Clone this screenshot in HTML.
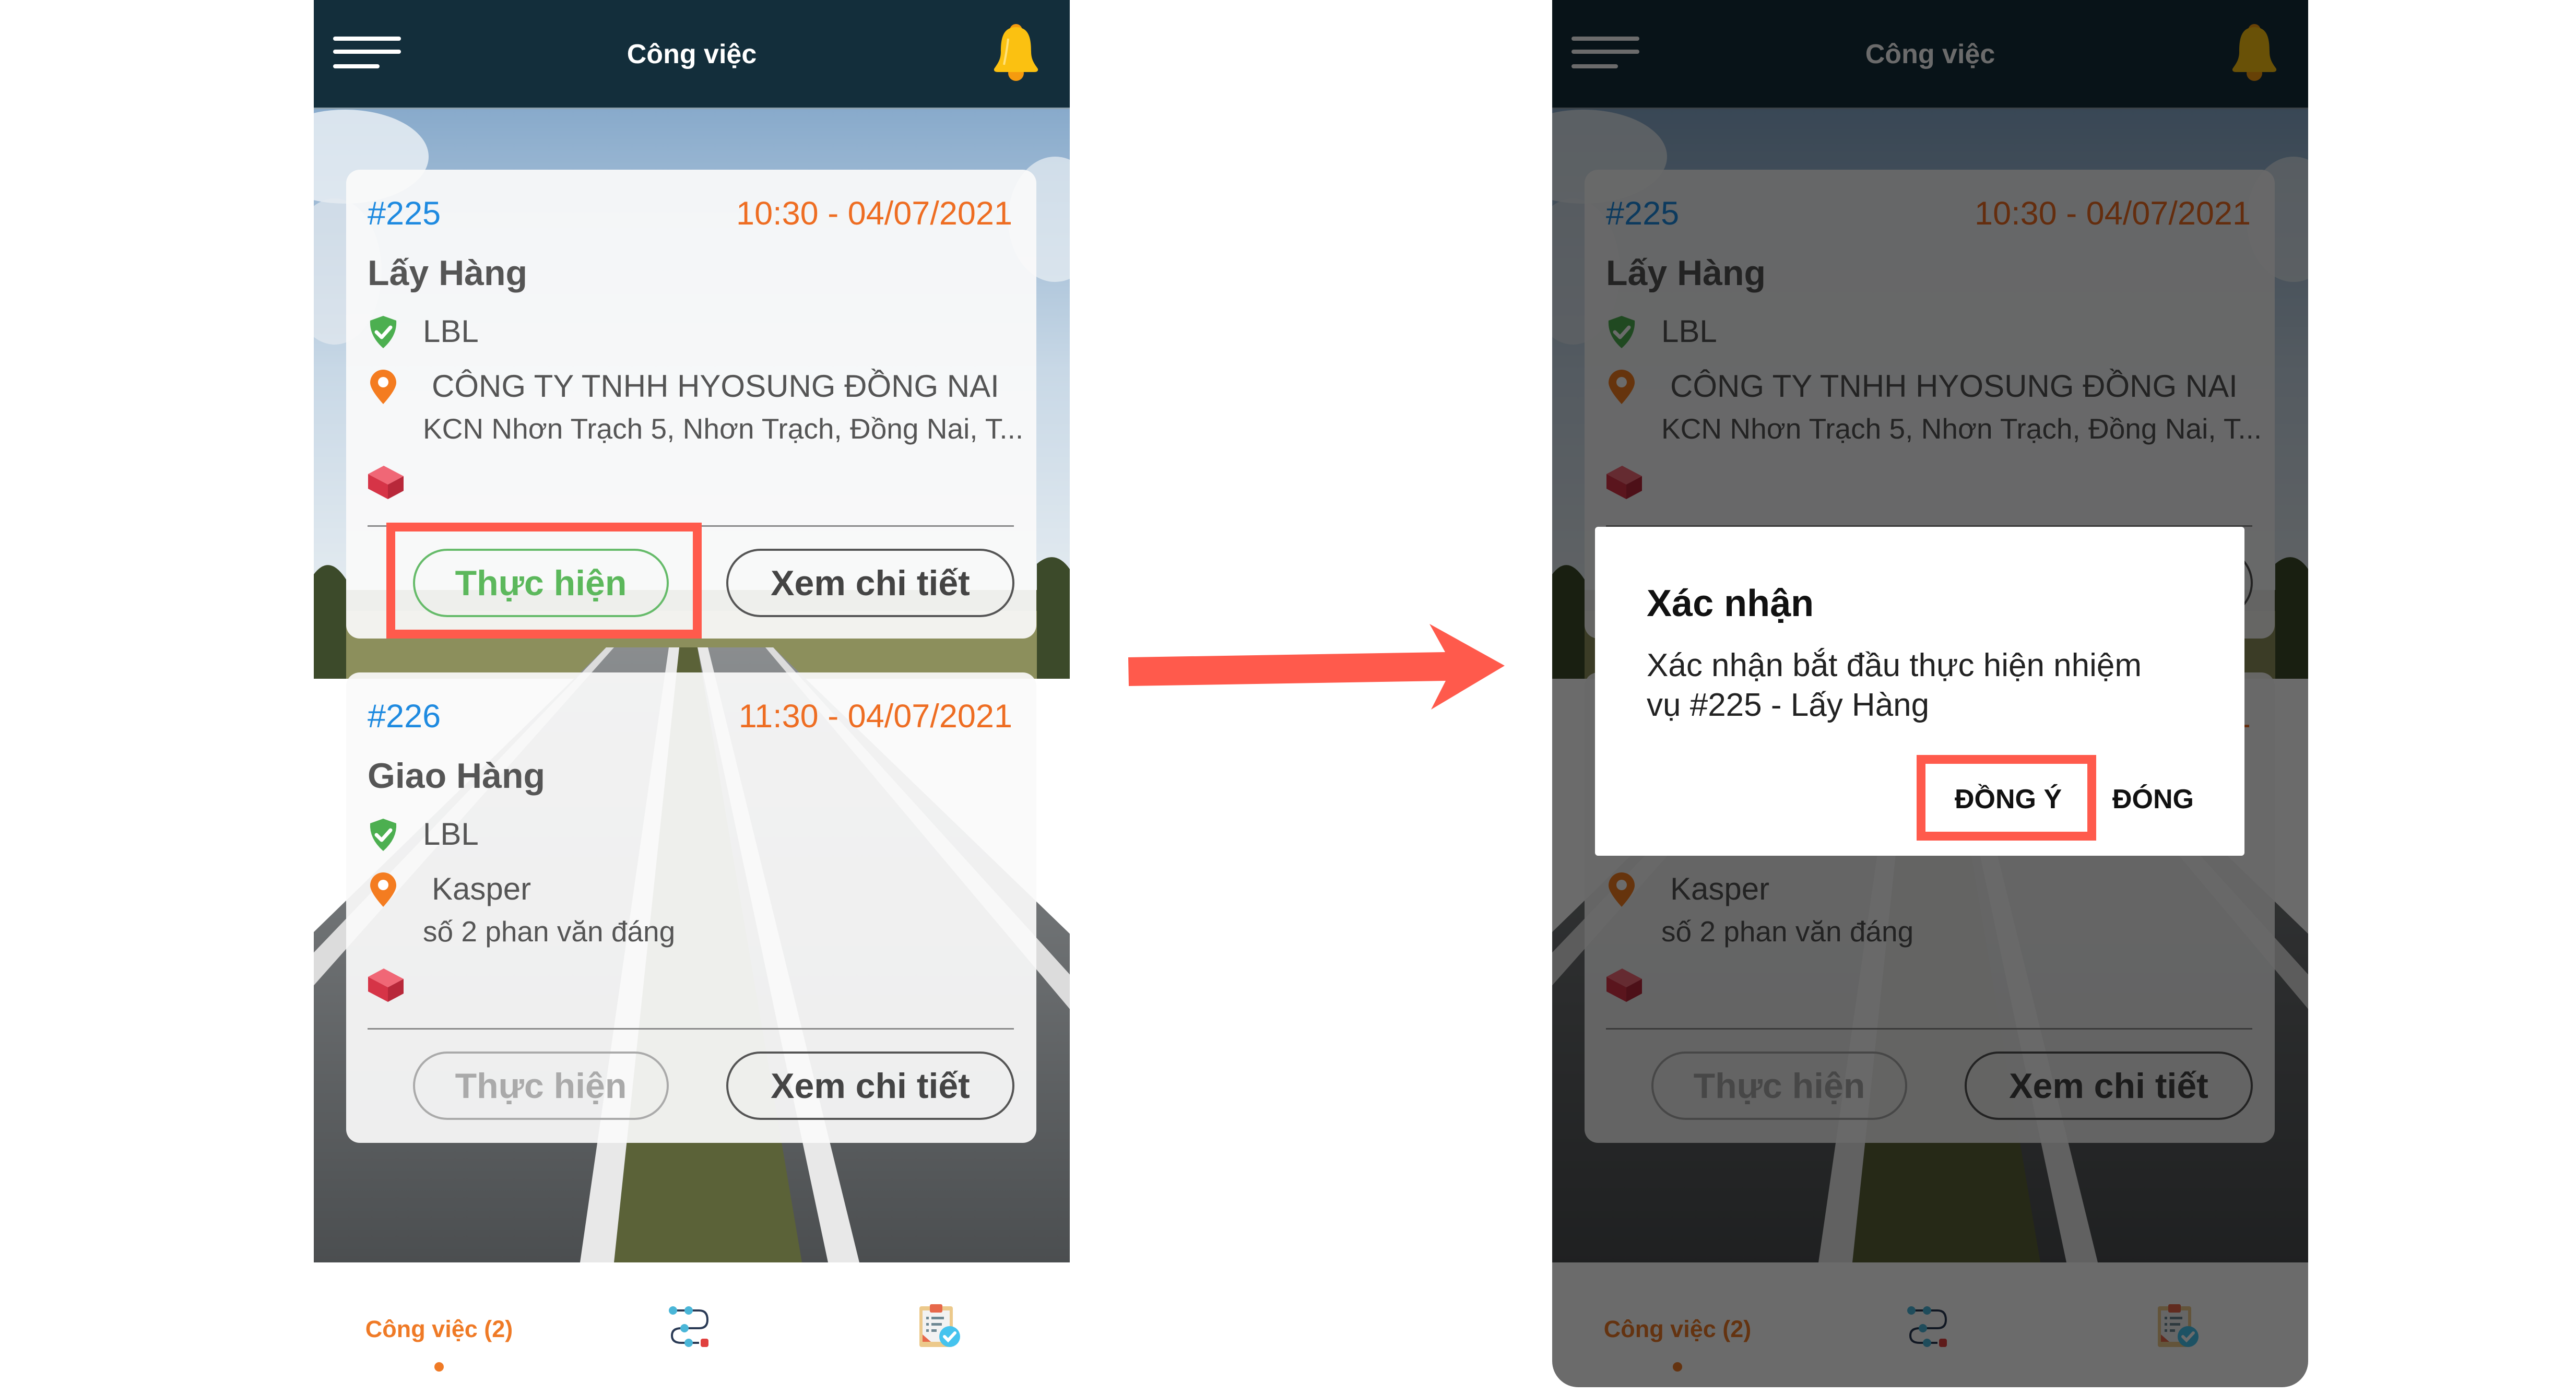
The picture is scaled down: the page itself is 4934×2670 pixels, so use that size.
<!DOCTYPE html>
<html><head><meta charset="utf-8">
<style>
*{margin:0;padding:0;box-sizing:border-box}
body{width:4934px;height:2670px;background:#fff;position:relative;overflow:hidden;font-family:"Liberation Sans","Noto Sans CJK SC",sans-serif}
.phone{position:absolute;top:0;width:1448px;height:2657px;overflow:hidden;border-radius:0 0 50px 50px;background:#fff}
.hdr{position:absolute;left:0;top:0;width:1448px;height:209px;background:#132e3b;border-bottom:3px solid #8da1ad}
.hdr .t{position:absolute;left:0;width:1448px;top:78px;text-align:center;color:#fff;font-weight:bold;font-size:52px;line-height:52px}
.hb{position:absolute;left:37px;height:8px;border-radius:4px;background:#fff}
.bg{position:absolute;left:0;top:209px}
.card{position:absolute;left:62px;width:1322px;height:898px;border-radius:26px;background:rgba(250,250,250,0.93)}
.card div{position:absolute;white-space:nowrap}
.id{left:41px;top:53px;font-size:63px;line-height:63px;color:#1e8ae0}
.dt{right:46px;top:53px;font-size:63px;line-height:63px;color:#ee6d22}
.ti{left:41px;top:164px;font-size:68px;line-height:68px;font-weight:bold;color:#555}
.lb{left:147px;top:280px;font-size:60px;line-height:60px;color:#555}
.ad{left:164px;top:385px;font-size:60px;line-height:60px;color:#555}
.sb{left:147px;top:469px;font-size:55px;line-height:55px;color:#555}
.dv{left:41px;top:681px;width:1238px;height:3px;background:#8a8a8a}
.btn{top:726px;height:131px;border-radius:66px;border:4px solid #555;font-weight:bold;font-size:68px;display:flex;align-items:center;justify-content:center;color:#444}
.b1{left:128px;width:490px}
.b2{left:728px;width:552px}
.g{border-color:#66bb6a;color:#5cb85c}
.d{border-color:#aaa;color:#aaa}
.card svg{position:absolute}
.nav{position:absolute;left:0;top:2418px;width:1448px;height:239px;background:#fff}
.nt{position:absolute;left:90px;width:300px;text-align:center;top:2523px;font-size:45px;line-height:45px;font-weight:bold;color:#ef7a26}
.red{position:absolute;border:17px solid #ff5a4c}
</style></head><body>

<!-- LEFT PHONE -->
<div class="phone" style="left:601px">
<svg class="bg" width="1448" height="2209" viewBox="0 209 1448 2209">
<defs>
<linearGradient id="sky" x1="0" y1="0" x2="0" y2="1"><stop offset="0" stop-color="#88aacb"/><stop offset="0.5" stop-color="#c8d8e6"/><stop offset="1" stop-color="#e8eef2"/></linearGradient>
<linearGradient id="rd" x1="0" y1="0" x2="0" y2="1"><stop offset="0" stop-color="#8a8d8f"/><stop offset="1" stop-color="#4b4e50"/></linearGradient>
</defs>
<rect x="0" y="209" width="1448" height="1000" fill="url(#sky)"/>
<ellipse cx="60" cy="300" rx="160" ry="90" fill="#eef2f6" opacity="0.8"/>
<ellipse cx="40" cy="520" rx="90" ry="140" fill="#e4eaf0" opacity="0.7"/>
<ellipse cx="1420" cy="420" rx="90" ry="120" fill="#eaf0f4" opacity="0.7"/>
<rect x="0" y="1130" width="1448" height="170" fill="#55603a"/>
<rect x="0" y="1170" width="1448" height="130" fill="#8c8f5c"/>
<path d="M0 1100 Q30 1060 62 1110 L62 1300 L0 1300Z" fill="#3c4a2a"/>
<path d="M1385 1080 Q1420 1050 1448 1090 L1448 1300 L1385 1300Z" fill="#3c4a2a"/>
<polygon points="560,1240 880,1240 2100,2418 -650,2418" fill="url(#rd)"/>
<polygon points="700,1240 735,1240 935,2418 575,2418" fill="#5b6238"/>
<polygon points="680,1240 700,1240 575,2418 510,2418" fill="#e8e8e8"/>
<polygon points="735,1240 755,1240 1045,2418 985,2418" fill="#e8e8e8"/>
<polygon points="560,1240 575,1240 -100,2000 -130,1960" fill="#dcdcdc"/>
<polygon points="865,1240 880,1240 1560,1990 1530,2030" fill="#dcdcdc"/>
</svg>

<div class="hdr">
<div class="hb" style="top:70px;width:130px"></div>
<div class="hb" style="top:95px;width:130px"></div>
<div class="hb" style="top:123px;width:89px"></div>
<div class="t">Công việc</div>
<svg style="position:absolute;left:1300px;top:44px" width="90" height="112" viewBox="0 0 90 112"><circle cx="45" cy="14" r="12" fill="#f59b0f"/><circle cx="45" cy="96" r="15" fill="#f59b0f"/><path d="M45 8 C20 8 16 30 16 55 C16 72 8 80 3 88 Q2 94 10 94 L80 94 Q88 94 87 88 C82 80 74 72 74 55 C74 30 70 8 45 8Z" fill="#fbc111"/><path d="M30 30 Q28 50 22 80" stroke="#ffe27a" stroke-width="4" fill="none"/></svg>
</div>

<div class="card" style="top:325px">
<div class="id">#225</div><div class="dt">10:30 - 04/07/2021</div>
<div class="ti">Lấy Hàng</div>
<svg style="left:42px;top:278px" width="58" height="66" viewBox="0 0 58 66"><path d="M29 2 L54 11 Q56 40 29 64 Q2 40 4 11Z" fill="#4caf50"/><path d="M16 33 L26 43 L43 24" stroke="#fff" stroke-width="7" fill="none" stroke-linecap="round" stroke-linejoin="round"/></svg>
<div class="lb">LBL</div>
<svg style="left:42px;top:381px" width="58" height="70" viewBox="0 0 58 70"><path d="M29 68 Q4 40 4 27 A25 25 0 0 1 54 27 Q54 40 29 68Z" fill="#f47c20"/><circle cx="29" cy="26" r="10" fill="#fff"/></svg>
<div class="ad">CÔNG TY TNHH HYOSUNG ĐỒNG NAI</div>
<div class="sb">KCN Nhơn Trạch 5, Nhơn Trạch, Đồng Nai, T...</div>
<svg style="left:40px;top:561px" width="72" height="72" viewBox="0 0 72 72"><polygon points="2,22 32,6 70,26 40,42" fill="#f06776"/><polygon points="2,22 40,42 40,70 2,50" fill="#d63447"/><polygon points="40,42 70,26 70,54 40,70" fill="#b8283a"/></svg>
<div class="dv"></div>
<div class="btn b1 g">Thực hiện</div>
<div class="btn b2">Xem chi tiết</div>
</div>

<div class="card" style="top:1288px;height:901px">
<div class="id">#226</div><div class="dt">11:30 - 04/07/2021</div>
<div class="ti">Giao Hàng</div>
<svg style="left:42px;top:278px" width="58" height="66" viewBox="0 0 58 66"><path d="M29 2 L54 11 Q56 40 29 64 Q2 40 4 11Z" fill="#4caf50"/><path d="M16 33 L26 43 L43 24" stroke="#fff" stroke-width="7" fill="none" stroke-linecap="round" stroke-linejoin="round"/></svg>
<div class="lb">LBL</div>
<svg style="left:42px;top:381px" width="58" height="70" viewBox="0 0 58 70"><path d="M29 68 Q4 40 4 27 A25 25 0 0 1 54 27 Q54 40 29 68Z" fill="#f47c20"/><circle cx="29" cy="26" r="10" fill="#fff"/></svg>
<div class="ad">Kasper</div>
<div class="sb">số 2 phan văn đáng</div>
<svg style="left:40px;top:561px" width="72" height="72" viewBox="0 0 72 72"><polygon points="2,22 32,6 70,26 40,42" fill="#f06776"/><polygon points="2,22 40,42 40,70 2,50" fill="#d63447"/><polygon points="40,42 70,26 70,54 40,70" fill="#b8283a"/></svg>
<div class="dv"></div>
<div class="btn b1 d">Thực hiện</div>
<div class="btn b2">Xem chi tiết</div>
</div>

<div class="nav"></div>
<div class="nt">Công việc (2)</div>
<div style="position:absolute;left:231px;top:2609px;width:18px;height:18px;border-radius:9px;background:#ef7a26"></div>
<svg style="position:absolute;left:678px;top:2500px" width="82" height="80" viewBox="0 0 82 80"><path d="M12 10 H34 M42 10 H60 Q76 10 76 28 Q76 44 60 44 H38 M26 44 Q8 44 8 58 Q8 72 26 72 H36 M44 72 H60" stroke="#2a3a55" stroke-width="4" fill="none"/><circle cx="10" cy="10" r="8" fill="#4ab6d8"/><circle cx="40" cy="10" r="8" fill="#4ab6d8"/><circle cx="32" cy="44" r="8" fill="#4ab6d8"/><circle cx="40" cy="72" r="8" fill="#4ab6d8"/><rect x="63" y="64" width="15" height="16" rx="4" fill="#e0403e"/></svg>
<svg style="position:absolute;left:1158px;top:2498px" width="82" height="84" viewBox="0 0 82 84"><rect x="2" y="4" width="64" height="78" rx="4" fill="#ecc98b"/><rect x="8" y="12" width="52" height="60" fill="#f2f2f2"/><rect x="22" y="0" width="24" height="16" rx="3" fill="#e7684b"/><polygon points="8,58 8,72 24,72" fill="#e7684b"/><g fill="#6e8893"><rect x="15" y="24" width="5" height="5"/><rect x="15" y="36" width="5" height="5"/><rect x="15" y="48" width="5" height="5"/><rect x="25" y="24" width="24" height="5"/><rect x="25" y="36" width="20" height="5"/><rect x="25" y="48" width="10" height="5"/></g><circle cx="60" cy="62" r="20" fill="#45c3ee"/><path d="M50 62 L57 69 L70 55" stroke="#fff" stroke-width="6" fill="none" stroke-linecap="round"/></svg>

<div class="red" style="left:139px;top:1001px;width:604px;height:222px"></div>
</div>

<!-- ARROW -->
<svg style="position:absolute;left:0;top:0" width="4934" height="2670"><polygon points="2161,1259 2768,1249 2738,1195 2882,1275 2741,1359 2769,1304 2162,1314" fill="#ff5a4c"/></svg>

<!-- RIGHT PHONE -->
<div class="phone" style="left:2973px">
<svg class="bg" width="1448" height="2209" viewBox="0 209 1448 2209">
<defs>
<linearGradient id="sky2" x1="0" y1="0" x2="0" y2="1"><stop offset="0" stop-color="#88aacb"/><stop offset="0.5" stop-color="#c8d8e6"/><stop offset="1" stop-color="#e8eef2"/></linearGradient>
<linearGradient id="rd2" x1="0" y1="0" x2="0" y2="1"><stop offset="0" stop-color="#8a8d8f"/><stop offset="1" stop-color="#4b4e50"/></linearGradient>
</defs>
<rect x="0" y="209" width="1448" height="1000" fill="url(#sky2)"/>
<ellipse cx="60" cy="300" rx="160" ry="90" fill="#eef2f6" opacity="0.8"/>
<ellipse cx="40" cy="520" rx="90" ry="140" fill="#e4eaf0" opacity="0.7"/>
<ellipse cx="1420" cy="420" rx="90" ry="120" fill="#eaf0f4" opacity="0.7"/>
<rect x="0" y="1130" width="1448" height="170" fill="#55603a"/>
<rect x="0" y="1170" width="1448" height="130" fill="#8c8f5c"/>
<path d="M0 1100 Q30 1060 62 1110 L62 1300 L0 1300Z" fill="#3c4a2a"/>
<path d="M1385 1080 Q1420 1050 1448 1090 L1448 1300 L1385 1300Z" fill="#3c4a2a"/>
<polygon points="560,1240 880,1240 2100,2418 -650,2418" fill="url(#rd2)"/>
<polygon points="700,1240 735,1240 935,2418 575,2418" fill="#5b6238"/>
<polygon points="680,1240 700,1240 575,2418 510,2418" fill="#e8e8e8"/>
<polygon points="735,1240 755,1240 1045,2418 985,2418" fill="#e8e8e8"/>
<polygon points="560,1240 575,1240 -100,2000 -130,1960" fill="#dcdcdc"/>
<polygon points="865,1240 880,1240 1560,1990 1530,2030" fill="#dcdcdc"/>
</svg>

<div class="hdr">
<div class="hb" style="top:70px;width:130px"></div>
<div class="hb" style="top:95px;width:130px"></div>
<div class="hb" style="top:123px;width:89px"></div>
<div class="t">Công việc</div>
<svg style="position:absolute;left:1300px;top:44px" width="90" height="112" viewBox="0 0 90 112"><circle cx="45" cy="14" r="12" fill="#f59b0f"/><circle cx="45" cy="96" r="15" fill="#f59b0f"/><path d="M45 8 C20 8 16 30 16 55 C16 72 8 80 3 88 Q2 94 10 94 L80 94 Q88 94 87 88 C82 80 74 72 74 55 C74 30 70 8 45 8Z" fill="#fbc111"/></svg>
</div>

<div class="card" style="top:325px">
<div class="id">#225</div><div class="dt">10:30 - 04/07/2021</div>
<div class="ti">Lấy Hàng</div>
<svg style="left:42px;top:278px" width="58" height="66" viewBox="0 0 58 66"><path d="M29 2 L54 11 Q56 40 29 64 Q2 40 4 11Z" fill="#4caf50"/><path d="M16 33 L26 43 L43 24" stroke="#fff" stroke-width="7" fill="none" stroke-linecap="round" stroke-linejoin="round"/></svg>
<div class="lb">LBL</div>
<svg style="left:42px;top:381px" width="58" height="70" viewBox="0 0 58 70"><path d="M29 68 Q4 40 4 27 A25 25 0 0 1 54 27 Q54 40 29 68Z" fill="#f47c20"/><circle cx="29" cy="26" r="10" fill="#fff"/></svg>
<div class="ad">CÔNG TY TNHH HYOSUNG ĐỒNG NAI</div>
<div class="sb">KCN Nhơn Trạch 5, Nhơn Trạch, Đồng Nai, T...</div>
<svg style="left:40px;top:561px" width="72" height="72" viewBox="0 0 72 72"><polygon points="2,22 32,6 70,26 40,42" fill="#f06776"/><polygon points="2,22 40,42 40,70 2,50" fill="#d63447"/><polygon points="40,42 70,26 70,54 40,70" fill="#b8283a"/></svg>
<div class="dv"></div>
<div class="btn b1 g">Thực hiện</div>
<div class="btn b2">Xem chi tiết</div>
</div>

<div class="card" style="top:1288px;height:901px">
<div class="id">#226</div><div class="dt">11:30 - 04/07/2021</div>
<div class="ti">Giao Hàng</div>
<svg style="left:42px;top:278px" width="58" height="66" viewBox="0 0 58 66"><path d="M29 2 L54 11 Q56 40 29 64 Q2 40 4 11Z" fill="#4caf50"/><path d="M16 33 L26 43 L43 24" stroke="#fff" stroke-width="7" fill="none" stroke-linecap="round" stroke-linejoin="round"/></svg>
<div class="lb">LBL</div>
<svg style="left:42px;top:381px" width="58" height="70" viewBox="0 0 58 70"><path d="M29 68 Q4 40 4 27 A25 25 0 0 1 54 27 Q54 40 29 68Z" fill="#f47c20"/><circle cx="29" cy="26" r="10" fill="#fff"/></svg>
<div class="ad">Kasper</div>
<div class="sb">số 2 phan văn đáng</div>
<svg style="left:40px;top:561px" width="72" height="72" viewBox="0 0 72 72"><polygon points="2,22 32,6 70,26 40,42" fill="#f06776"/><polygon points="2,22 40,42 40,70 2,50" fill="#d63447"/><polygon points="40,42 70,26 70,54 40,70" fill="#b8283a"/></svg>
<div class="dv"></div>
<div class="btn b1 d">Thực hiện</div>
<div class="btn b2">Xem chi tiết</div>
</div>

<div class="nav"></div>
<div class="nt">Công việc (2)</div>
<div style="position:absolute;left:231px;top:2609px;width:18px;height:18px;border-radius:9px;background:#ef7a26"></div>
<svg style="position:absolute;left:678px;top:2500px" width="82" height="80" viewBox="0 0 82 80"><path d="M12 10 H34 M42 10 H60 Q76 10 76 28 Q76 44 60 44 H38 M26 44 Q8 44 8 58 Q8 72 26 72 H36 M44 72 H60" stroke="#2a3a55" stroke-width="4" fill="none"/><circle cx="10" cy="10" r="8" fill="#4ab6d8"/><circle cx="40" cy="10" r="8" fill="#4ab6d8"/><circle cx="32" cy="44" r="8" fill="#4ab6d8"/><circle cx="40" cy="72" r="8" fill="#4ab6d8"/><rect x="63" y="64" width="15" height="16" rx="4" fill="#e0403e"/></svg>
<svg style="position:absolute;left:1158px;top:2498px" width="82" height="84" viewBox="0 0 82 84"><rect x="2" y="4" width="64" height="78" rx="4" fill="#ecc98b"/><rect x="8" y="12" width="52" height="60" fill="#f2f2f2"/><rect x="22" y="0" width="24" height="16" rx="3" fill="#e7684b"/><polygon points="8,58 8,72 24,72" fill="#e7684b"/><g fill="#6e8893"><rect x="15" y="24" width="5" height="5"/><rect x="15" y="36" width="5" height="5"/><rect x="15" y="48" width="5" height="5"/><rect x="25" y="24" width="24" height="5"/><rect x="25" y="36" width="20" height="5"/><rect x="25" y="48" width="10" height="5"/></g><circle cx="60" cy="62" r="20" fill="#45c3ee"/><path d="M50 62 L57 69 L70 55" stroke="#fff" stroke-width="6" fill="none" stroke-linecap="round"/></svg>

<div style="position:absolute;left:0;top:0;width:1448px;height:2657px;background:rgba(0,0,0,0.58)"></div>

<div style="position:absolute;left:82px;top:1009px;width:1244px;height:630px;background:#fff;border-radius:6px">
<div style="position:absolute;left:99px;top:111px;font-size:72px;line-height:72px;font-weight:bold;color:#111;white-space:nowrap">Xác nhận</div>
<div style="position:absolute;left:99px;top:228px;font-size:62px;line-height:76px;color:#222;white-space:nowrap">Xác nhận bắt đầu thực hiện nhiệm<br>vụ #225 - Lấy Hàng</div>
<div style="position:absolute;left:689px;top:496px;font-size:52px;line-height:52px;font-weight:bold;color:#111;white-space:nowrap">ĐỒNG Ý</div>
<div style="position:absolute;left:991px;top:496px;font-size:52px;line-height:52px;font-weight:bold;color:#111;white-space:nowrap">ĐÓNG</div>
</div>
<div class="red" style="left:698px;top:1446px;width:344px;height:164px"></div>
</div>

</body></html>
